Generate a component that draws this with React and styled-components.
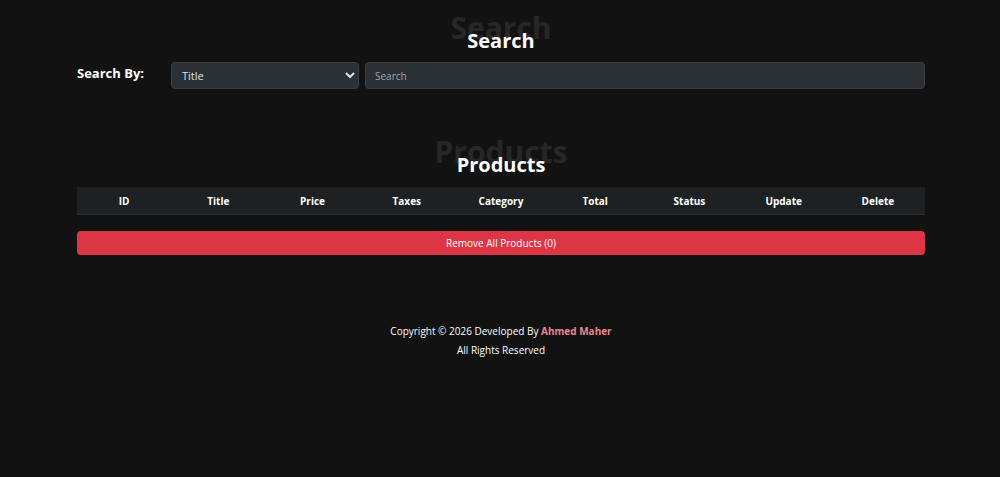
import React from "react";
import styled, { createGlobalStyle } from "styled-components";

const GlobalStyle = createGlobalStyle`
  * { box-sizing: border-box; }
  body {
    margin: 0;
    background-color: #121212;
    color: #fff;
    font-family: "Open Sans", "Noto Sans", sans-serif;
  }
`;

const Page = styled.div`
  width: 850px;
  margin: 0 auto;
  padding: 14px 0 0 2px;
`;

const SectionTitle = styled.h2`
  position: relative;
  margin: 0;
  height: 38px;
  text-align: center;
  font-size: 20px;
  font-weight: 700;
  line-height: 1;
  padding-top: 17px;
  color: #fff;

  &::before {
    content: "${(p) => p.ghost}";
    position: absolute;
    left: 0;
    right: 0;
    top: -1px;
    font-size: 30px;
    color: #272727;
    z-index: 0;
  }

  & > span {
    position: relative;
    z-index: 1;
  }
`;

const SearchRow = styled.div`
  display: flex;
  align-items: flex-start;
  gap: 6px;
  margin-top: 10px;
`;

const SearchLabel = styled.label`
  width: 88px;
  font-size: 13px;
  font-weight: 700;
  padding-top: 2px;
`;

const Select = styled.select`
  width: 188px;
  height: 27px;
  background-color: #2b3035;
  color: #dee2e6;
  border: 1px solid #3a3f45;
  border-radius: 4px;
  font-family: inherit;
  font-size: 11px;
  padding: 0 6px;
`;

const SearchInput = styled.input`
  flex: 1;
  height: 27px;
  background-color: #2b3035;
  color: #dee2e6;
  border: 1px solid #3a3f45;
  border-radius: 4px;
  font-family: inherit;
  font-size: 10px;
  padding: 0 9px;

  &::placeholder {
    color: #a0a4a8;
  }
`;

const ProductsSection = styled.section`
  margin-top: 49px;
`;

const Table = styled.table`
  width: 100%;
  border-collapse: collapse;
  table-layout: fixed;
  margin-top: 11px;
`;

const Th = styled.th`
  background-color: #1e2124;
  color: #fff;
  font-size: 10px;
  font-weight: 700;
  height: 27px;
  padding-top: 2px;
  text-align: center;
  border-bottom: 1px solid #2b2f33;
`;

const DangerButton = styled.button`
  display: block;
  width: 100%;
  height: 24px;
  margin-top: 16px;
  background-color: #dc3545;
  color: #fff;
  border: none;
  border-radius: 4px;
  font-family: inherit;
  font-size: 10px;
`;

const Footer = styled.footer`
  margin-top: 67px;
  text-align: center;
  font-size: 10px;
  line-height: 19px;
  color: #fff;
`;

const Author = styled.span`
  color: #ea868f;
  font-weight: 700;
`;

const columns = ["ID", "Title", "Price", "Taxes", "Category", "Total", "Status", "Update", "Delete"];

export default function App() {
  return (
    <>
      <GlobalStyle />
      <Page>
        <SectionTitle ghost="Search">
          <span>Search</span>
        </SectionTitle>
        <SearchRow>
          <SearchLabel>Search By:</SearchLabel>
          <Select defaultValue="title">
            <option value="title">Title</option>
            <option value="category">Category</option>
          </Select>
          <SearchInput type="text" placeholder="Search" />
        </SearchRow>

        <ProductsSection>
          <SectionTitle ghost="Products">
            <span>Products</span>
          </SectionTitle>
          <Table>
            <thead>
              <tr>
                {columns.map((c) => (
                  <Th key={c}>{c}</Th>
                ))}
              </tr>
            </thead>
            <tbody />
          </Table>
          <DangerButton>Remove All Products (0)</DangerButton>
        </ProductsSection>

        <Footer>
          <div>
            Copyright © 2026 Developed By <Author>Ahmed Maher</Author>
          </div>
          <div>All Rights Reserved</div>
        </Footer>
      </Page>
    </>
  );
}
